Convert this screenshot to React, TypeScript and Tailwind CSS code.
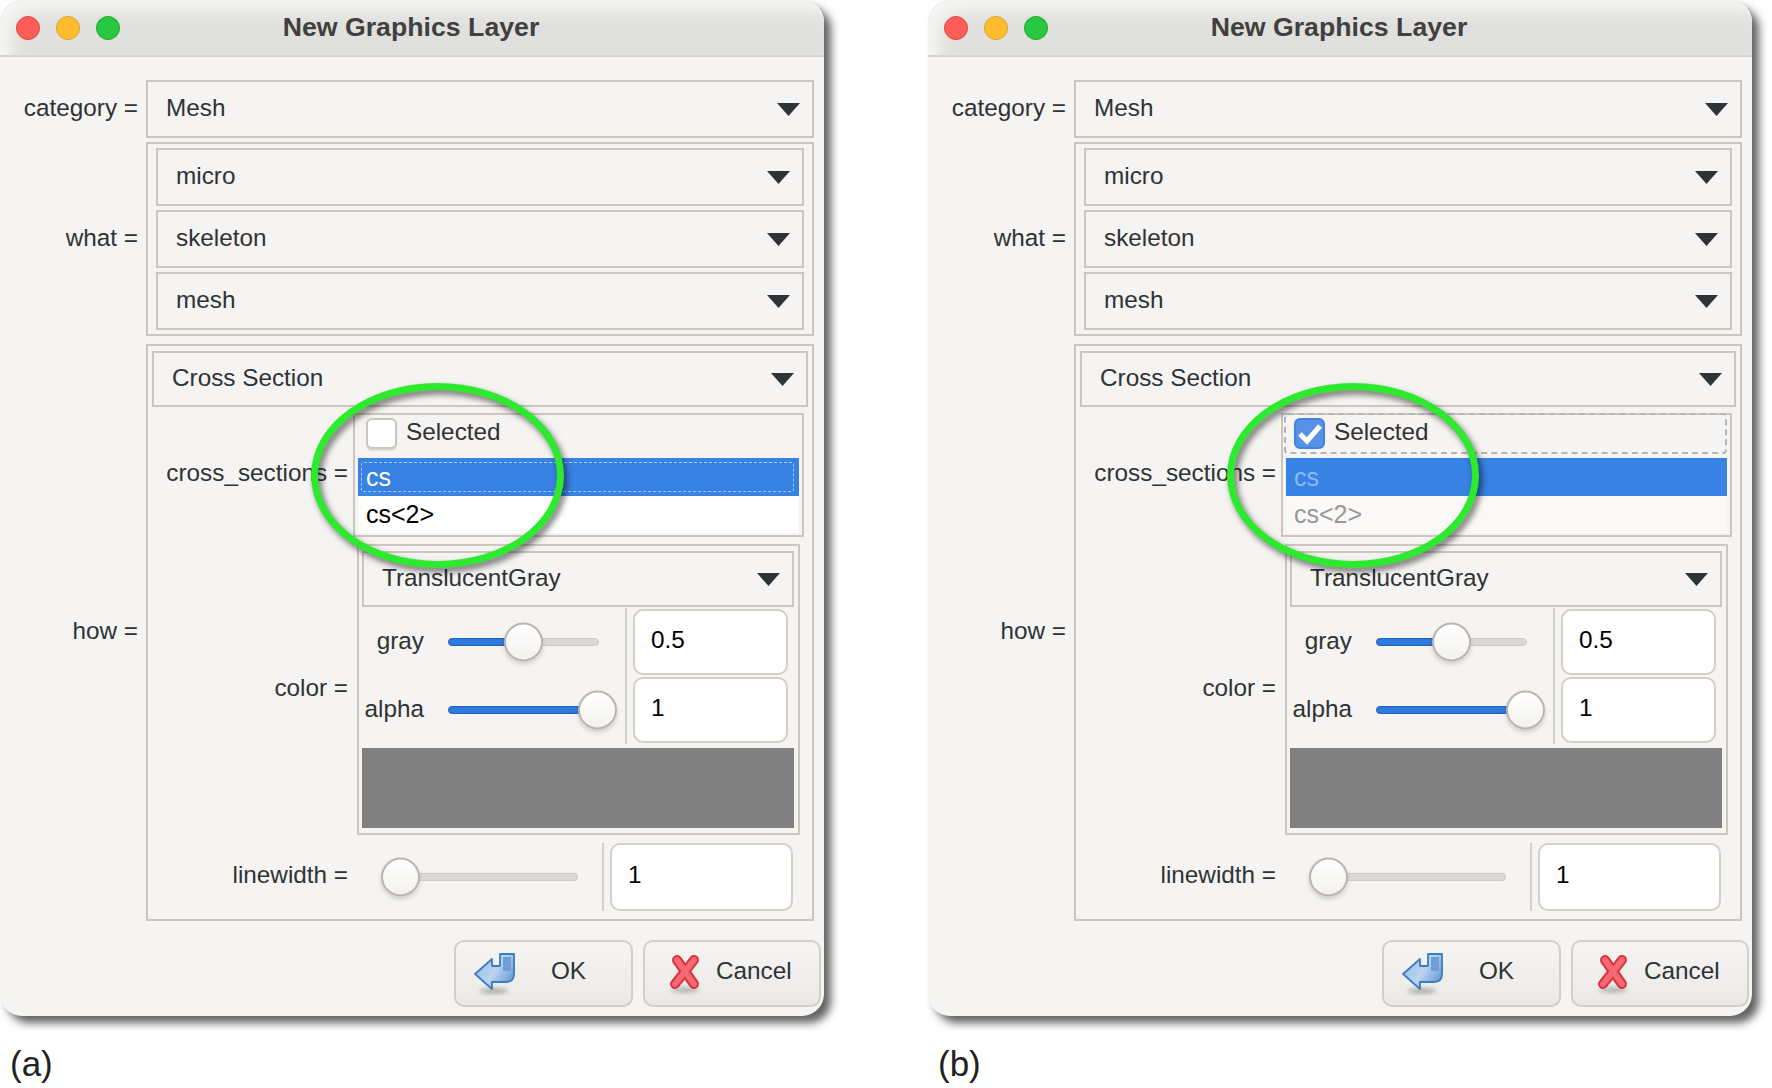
import React from "react";

const Triangle = () => (
  <svg width="23" height="13" viewBox="0 0 23 13" className="shrink-0">
    <polygon points="0,0 23,0 11.5,13" fill="#2e3336" />
  </svg>
);

function Combo({ label, className }: { label: string; className: string }) {
  return (
    <div className={"flex items-center justify-between border-2 border-[#ccc6bf] pl-[18px] pr-[12px] " + className}>
      <span className="pb-[1px]">{label}</span>
      <Triangle />
    </div>
  );
}

const Knob = ({ className }: { className: string }) => (
  <div
    className={
      "absolute top-1/2 h-[39px] w-[39px] -translate-y-1/2 rounded-full border-2 border-[#bcb5ad] bg-gradient-to-b from-white to-[#f3f2f0] shadow-[0_3px_4px_rgba(0,0,0,0.15)] " +
      className
    }
  />
);

const Input = ({ value, className }: { value: string; className: string }) => (
  <div className={"flex items-center rounded-[10px] border-2 border-[#d3cfc9] bg-white pl-[16px] pb-[4px] text-black " + className}>
    {value}
  </div>
);

const OkIcon = () => (
  <svg width="60" height="50" viewBox="0 0 60 50" className="shrink-0">
    <defs>
      <linearGradient id="okFill" x1="0" y1="0" x2="1" y2="0.6">
        <stop offset="0" stopColor="#8fbbe8" />
        <stop offset="0.6" stopColor="#b9d5f0" />
        <stop offset="1" stopColor="#6f9fd6" />
      </linearGradient>
      <filter id="okBlur" x="-50%" y="-100%" width="200%" height="300%">
        <feGaussianBlur stdDeviation="2" />
      </filter>
    </defs>
    <ellipse cx="27" cy="44" rx="14" ry="3" fill="#000" opacity="0.25" filter="url(#okBlur)" />
    <path
      d="M8 27 L25 12 L25 19 L33 19 L33 7 L47 7 L47 27 Q47 35 39 35 L25 35 L25 42 Z"
      fill="url(#okFill)"
      stroke="#3f7ac0"
      strokeWidth="1.8"
      strokeLinejoin="round"
    />
    <path d="M36 10 L44 10 L44 24 L36 24 Z" fill="#6c9ed8" />
  </svg>
);

const CancelIcon = () => (
  <svg width="50" height="50" viewBox="0 0 50 50" className="shrink-0">
    <defs>
      <filter id="xBlur" x="-50%" y="-100%" width="200%" height="300%">
        <feGaussianBlur stdDeviation="2" />
      </filter>
    </defs>
    <ellipse cx="25" cy="43" rx="14" ry="3" fill="#000" opacity="0.22" filter="url(#xBlur)" />
    <path d="M17 13 L34 37 M34 13 L15 37" stroke="#d9323f" strokeWidth="10" strokeLinecap="round" fill="none" />
    <path d="M17 13 L34 37 M34 13 L15 37" stroke="#f66a72" strokeWidth="6" strokeLinecap="round" fill="none" />
  </svg>
);

function Window({ b }: { b: boolean }) {
  return (
    <div className="relative flex h-[1016px] w-[824px] flex-col rounded-[22px] bg-[#f5f4f2] text-[24.3px] leading-none text-[#2e3336] shadow-[7px_7px_8px_rgba(70,70,70,0.85)]">
      {/* title bar */}
      <div className="grid h-[57px] shrink-0 grid-cols-[1fr_auto_1fr] items-center rounded-t-[22px] border-b-2 border-[#d6d5d2] bg-[#e0e0de] pr-[2px] shadow-[inset_12px_12px_14px_#f5f4f2]">
        <div className="flex gap-[16px] pl-[16px]">
          <div className="h-[24px] w-[24px] rounded-full border border-[#e0443e] bg-[#ff5f57]" />
          <div className="h-[24px] w-[24px] rounded-full border border-[#dea123] bg-[#febc2e]" />
          <div className="h-[24px] w-[24px] rounded-full border border-[#1aab29] bg-[#28c840]" />
        </div>
        <div className="text-[26.7px] font-bold text-[#404040]">New Graphics Layer</div>
        <div />
      </div>

      {/* form */}
      <div className="flex flex-col pr-[10px] pt-[23px]">
        <div className="flex items-center">
          <div className="w-[138px] pb-[2px] text-right">category =</div>
          <Combo label="Mesh" className="ml-[8px] h-[58px] flex-1" />
        </div>

        <div className="mt-[4px] flex items-center">
          <div className="w-[138px] pb-[2px] text-right">what =</div>
          <div className="ml-[8px] flex flex-1 flex-col gap-[4px] border-2 border-[#ccc6bf] px-[8px] py-[4px]">
            <Combo label="micro" className="h-[58px]" />
            <Combo label="skeleton" className="h-[58px]" />
            <Combo label="mesh" className="h-[58px]" />
          </div>
        </div>

        <div className="mt-[8px] flex items-center">
          <div className="w-[138px] pb-[2px] text-right">how =</div>
          <div className="ml-[8px] flex flex-1 flex-col border-2 border-[#ccc6bf] pb-[8px] pt-[5px]">
            <Combo label="Cross Section" className="mx-[4px] h-[56px]" />

            <div className="mt-[6px] flex items-center">
              <div className="w-[200px] pb-[3px] text-right">cross_sections =</div>
              <div className="ml-[5px] mr-[8px] flex flex-1 flex-col border-2 border-[#ccc6bf] px-[3px] pb-[2px]">
                <div
                  className={
                    "relative -ml-[2px] -mt-[2px] flex h-[41px] items-center rounded-[4px] pl-[8px] " +
                    (b ? "border-2 border-dashed border-[#b5b5b5]" : "border-2 border-transparent")
                  }
                >
                  {b ? (
                    <div className="flex h-[31px] w-[31px] items-center justify-center rounded-[6px] border-2 border-[#3f84e0] bg-[#5592e8]">
                      <svg width="27" height="27" viewBox="0 0 27 27">
                        <path d="M4 14 L11 21 L24 6" stroke="#fff" strokeWidth="5" fill="none" />
                      </svg>
                    </div>
                  ) : (
                    <div className="h-[31px] w-[31px] rounded-[6px] border-2 border-[#c9c5bf] bg-white shadow-[0_2px_1px_rgba(0,0,0,0.1)]" />
                  )}
                  <span className="ml-[9px] pb-[3px]">Selected</span>
                </div>
                <div
                  className={
                    "mt-[4px] flex h-[38px] items-center bg-[#3882e3] pl-[8px] text-[25px] " +
                    (b ? "text-[#8dbaf2]" : "text-white")
                  }
                >
                  {b ? (
                    <span>cs</span>
                  ) : (
                    <div className="-ml-[5px] flex h-[30px] w-full items-center rounded-[3px] border border-dashed border-[#a9c8f0] pl-[4px]">
                      cs
                    </div>
                  )}
                </div>
                <div
                  className={
                    "flex h-[37px] items-center pl-[8px] text-[25px] " +
                    (b ? "bg-[#faf9f7] text-[#979797]" : "bg-white text-black")
                  }
                >
                  {"cs<2>"}
                </div>
              </div>
            </div>

            <div className="mt-[7px] flex items-center">
              <div className="w-[200px] pb-[2px] text-right">color =</div>
              <div className="ml-[9px] mr-[12px] flex flex-1 flex-col border-2 border-[#ccc6bf] pb-[5px] pl-[3px] pr-[4px] pt-[5px]">
                <Combo label="TranslucentGray" className="h-[56px]" />
                <div className="mt-[1px] flex h-[68px] items-center">
                  <div className="w-[62px] pb-[2px] text-right">gray</div>
                  <div className="relative ml-[24px] h-[8px] w-[151px] rounded-full border border-[#cfcac4] bg-[#dcd9d4]">
                    <div className="-ml-[1px] -mt-[1px] h-[8px] w-[60px] rounded-l-full border border-[#1e63c4] bg-[#2f78dd]" />
                    <Knob className="left-[55px]" />
                  </div>
                  <div className="ml-[26px] w-[2px] self-stretch bg-[#d3cfc9]" />
                  <Input value="0.5" className="ml-[6px] h-[66px] w-[155px]" />
                </div>
                <div className="flex h-[68px] items-center">
                  <div className="w-[62px] pb-[2px] text-right">alpha</div>
                  <div className="relative ml-[24px] h-[8px] w-[151px] rounded-full border border-[#cfcac4] bg-[#dcd9d4]">
                    <div className="-ml-[1px] -mt-[1px] h-[8px] w-[151px] rounded-full border border-[#1e63c4] bg-[#2f78dd]" />
                    <Knob className="left-[129px]" />
                  </div>
                  <div className="ml-[26px] w-[2px] self-stretch bg-[#d3cfc9]" />
                  <Input value="1" className="ml-[6px] h-[66px] w-[155px]" />
                </div>
                <div className="mt-[4px] h-[80px] bg-[#808080]" />
              </div>
            </div>

            <div className="mt-[8px] flex h-[68px] items-center">
              <div className="w-[200px] pb-[3px] text-right">linewidth =</div>
              <div className="relative ml-[33px] h-[8px] w-[197px] rounded-full border border-[#cfcac4] bg-[#dcd9d4]">
                <Knob className="-left-[1px]" />
              </div>
              <div className="ml-[24px] w-[2px] self-stretch bg-[#d3cfc9]" />
              <Input value="1" className="ml-[6px] h-[68px] w-[183px]" />
            </div>
          </div>
        </div>
      </div>

      {/* buttons */}
      <div className="mt-[19px] flex justify-end gap-[10px] pr-[3px]">
        <div className="flex h-[67px] w-[179px] items-center rounded-[10px] border-2 border-[#d3cec7] bg-gradient-to-b from-[#f6f5f3] to-[#eae9e6] pl-[11px] pr-[21px]">
          <div className="-mt-[4px] flex">
            <OkIcon />
          </div>
          <span className="flex-1 pb-[4px] text-center">OK</span>
        </div>
        <div className="flex h-[67px] w-[178px] items-center rounded-[10px] border-2 border-[#d3cec7] bg-gradient-to-b from-[#f6f5f3] to-[#eae9e6] pl-[15px]">
          <div className="-mt-[4px] flex">
            <CancelIcon />
          </div>
          <span className="ml-[6px] pb-[4px]">Cancel</span>
        </div>
      </div>

      {/* highlight ring */}
      <div
        className={
          "absolute top-[383px] h-[185px] rounded-[50%] border-[7px] border-[#2eea2e] drop-shadow-[3px_4px_3px_rgba(0,0,0,0.55)] " +
          (b ? "left-[299px] w-[252px]" : "left-[311px] w-[253px]")
        }
      />
    </div>
  );
}

export default function App() {
  return (
    <div className="flex h-[1088px] w-[1772px] gap-[104px] overflow-hidden bg-white font-['Liberation_Sans',Arial,sans-serif]">
      <div className="flex w-[824px] flex-col">
        <Window b={false} />
        <div className="ml-[10px] mt-[28px] text-[35px] leading-[40px] text-[#222]">(a)</div>
      </div>
      <div className="flex w-[824px] flex-col">
        <Window b={true} />
        <div className="ml-[10px] mt-[28px] text-[35px] leading-[40px] text-[#222]">(b)</div>
      </div>
    </div>
  );
}
